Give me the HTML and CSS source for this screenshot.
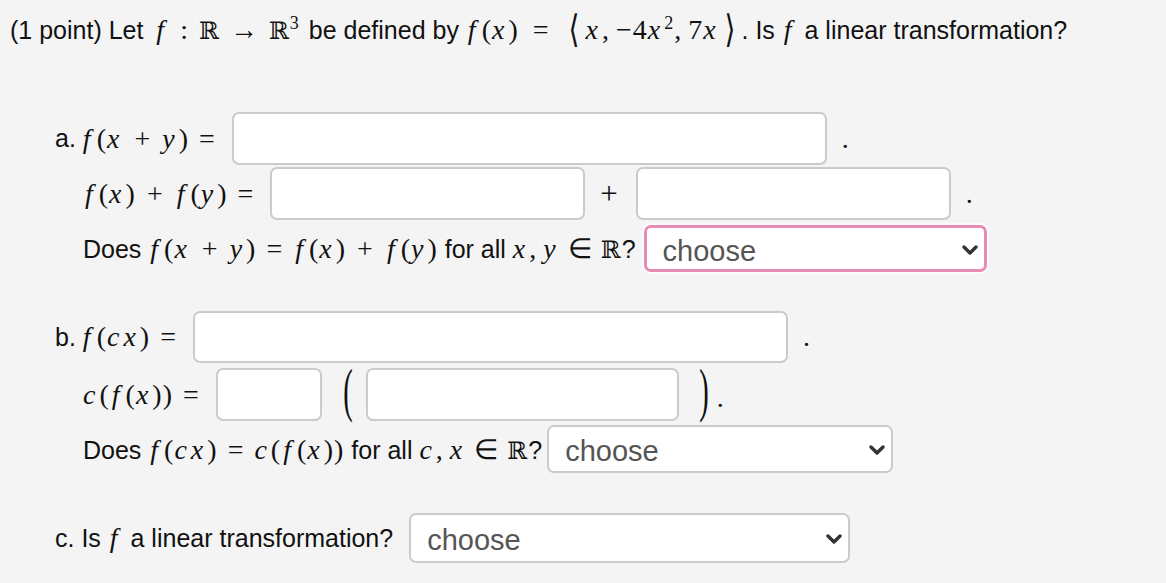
FILE: index.html
```html
<!DOCTYPE html>
<html lang="en">
<head>
<meta charset="utf-8">
<title>Linear transformation</title>
<link rel="stylesheet" href="styles.css">
</head>
<body>
<div class="page">
  <p class="title">(1 point) Let <span class="m lead"><i class="f">f</i><span class="rel">:</span><span class="bb">ℝ</span><span class="rel">→</span><span class="bb">ℝ</span><sup class="cube">3</sup></span> be defined by <span class="m"><i class="f">f</i>(<i>x</i>)<span class="rel wide">=</span><span class="ang">⟨</span><i>x</i>,<span class="sp"></span>−4<i>x</i><sup>2</sup>,<span class="sp"></span>7<i>x</i><span class="ang">⟩</span></span>. Is <span class="m"><i class="f">f</i></span> a linear transformation?</p>

  <div class="part part-a">
    <div class="row r-a1">
      <span class="lbl">a.</span>
      <span class="m"><i class="f">f</i>(<i>x</i><span class="op">+</span><i>y</i>)<span class="rel">=</span></span>
      <input class="box w-lg" type="text">
      <span class="m dot">.</span>
    </div>
    <div class="row sub r-a2">
      <span class="m"><i class="f">f</i>(<i>x</i>)<span class="op">+</span><i class="f">f</i>(<i>y</i>)<span class="rel">=</span></span>
      <input class="box w-md" type="text">
      <span class="m plus">+</span>
      <input class="box w-md" type="text">
      <span class="m dot">.</span>
    </div>
    <div class="row sub r-a3">
      <span class="txt">Does <span class="m"><i class="f">f</i>(<i>x</i><span class="op">+</span><i>y</i>)<span class="rel">=</span><i class="f">f</i>(<i>x</i>)<span class="op">+</span><i class="f">f</i>(<i>y</i>)</span> for all <span class="m"><i>x</i>,<span class="sp"></span><i>y</i><span class="rel in">∈</span><span class="bb">ℝ</span></span>?</span>
      <div class="select focus s-a">
        <select><option>choose</option><option>yes</option><option>no</option></select>
        <svg class="chev" viewBox="0 0 16 11" width="16" height="11"><path d="M2 2 L8 8 L14 2" fill="none" stroke="#333" stroke-width="3.4" stroke-linecap="round" stroke-linejoin="round"/></svg>
      </div>
    </div>
  </div>

  <div class="part part-b">
    <div class="row r-b1">
      <span class="lbl">b.</span>
      <span class="m"><i class="f">f</i>(<i>c</i><i>x</i>)<span class="rel">=</span></span>
      <input class="box w-lg" type="text">
      <span class="m dot">.</span>
    </div>
    <div class="row sub r-b2">
      <span class="m"><i>c</i>(<i class="f">f</i>(<i>x</i>))<span class="rel">=</span></span>
      <input class="box w-sm" type="text">
      <span class="m big open">(</span>
      <input class="box w-md2" type="text">
      <span class="m big close">)</span>
      <span class="m dot2">.</span>
    </div>
    <div class="row sub r-b3">
      <span class="txt">Does <span class="m"><i class="f">f</i>(<i>c</i><i>x</i>)<span class="rel">=</span><i>c</i>(<i class="f">f</i>(<i>x</i>))</span> for all <span class="m"><i>c</i>,<span class="sp"></span><i>x</i><span class="rel in">∈</span><span class="bb">ℝ</span></span>?</span>
      <div class="select s-b">
        <select><option>choose</option><option>yes</option><option>no</option></select>
        <svg class="chev" viewBox="0 0 16 11" width="16" height="11"><path d="M2 2 L8 8 L14 2" fill="none" stroke="#333" stroke-width="3.4" stroke-linecap="round" stroke-linejoin="round"/></svg>
      </div>
    </div>
  </div>

  <div class="part part-c">
    <div class="row r-c">
      <span class="txt">c. Is <span class="m"><i class="f">f</i></span> a linear transformation?</span>
      <div class="select s-c">
        <select><option>choose</option><option>yes</option><option>no</option></select>
        <svg class="chev" viewBox="0 0 16 11" width="16" height="11"><path d="M2 2 L8 8 L14 2" fill="none" stroke="#333" stroke-width="3.4" stroke-linecap="round" stroke-linejoin="round"/></svg>
      </div>
    </div>
  </div>
</div>
</body>
</html>
```

FILE: styles.css
```css
html, body {
  margin: 0;
  padding: 0;
  background: #f4f4f4;
}
body {
  font-family: "Liberation Sans", Arial, sans-serif;
  font-size: 25px;
  color: #111;
}
.page {
  padding: 12px 0 0 10px;
}
.title {
  margin: 0;
  height: 36px;
  line-height: 36px;
  white-space: nowrap;
}
.m {
  font-family: "Liberation Serif", "Times New Roman", serif;
  font-size: 28px;
  letter-spacing: 1px;
}
.m i {
  font-style: italic;
  padding-right: 3px;
}
.m i.f {
  padding: 0 5px 0 2px;
}
.m sup {
  font-size: 18px;
  line-height: 0;
  vertical-align: 10px;
}
.lead {
  margin-left: 4px;
}
.cube {
  margin-right: 2px;
}
.sp {
  display: inline-block;
  width: 6px;
}
.bb {
  font-family: "DejaVu Serif", serif;
  font-size: 24px;
}
.rel {
  margin: 0 10px;
}
.rel.wide {
  margin: 0 14px;
}
.rel.in {
  margin: 0 8px;
}
.op {
  margin: 0 11px;
}
.ang {
  display: inline-block;
  font-family: "DejaVu Serif", serif;
  transform: scaleY(1.35);
  margin: 0 5px;
}
.part {
  padding-left: 45px;
}
.part-a { margin-top: 64px; }
.part-b { margin-top: 39px; }
.part-c { margin-top: 40px; }
.row {
  display: flex;
  align-items: center;
  white-space: nowrap;
}
.row.sub {
  padding-left: 28px;
}
.lbl {
  margin-right: 5px;
}
.box {
  box-sizing: border-box;
  height: 53px;
  margin: 0 0 0 6px;
  border: 2px solid #cbcbcb;
  border-radius: 7px;
  background: #fff;
  padding: 0 10px;
  font-size: 22px;
  outline: none;
}
.w-lg { width: 595px; }
.w-md { width: 315px; }
.w-sm { width: 106px; }
.w-md2 { width: 313px; margin-left: 0; }
.dot {
  margin-left: 15px;
}
.plus {
  font-size: 31px;
  letter-spacing: 0;
  margin: 0 18px 0 15px;
}
.plus + .box { margin-left: 0; }
.big {
  display: inline-block;
  font-size: 30px;
  letter-spacing: 0;
  transform: translateY(-5px) scale(0.95, 2.0);
}
.big.open {
  margin: 0 13px 0 21px;
}
.big.close {
  margin: 0 16px 0 20px;
}
.dot2 {
  margin-left: -8px;
  padding-top: 6px;
}
.r-a2 { margin-top: 2px; }
.r-a3 { margin-top: 5px; }
.r-b2 { margin-top: 5px; }
.r-b3 { margin-top: 4px; }
.r-b1 .box { height: 52px; }
.select {
  position: relative;
  box-sizing: border-box;
  margin-left: 5px;
  height: 48px;
  border: 2px solid #cbcbcb;
  border-radius: 7px;
  background: #fff;
}
.select.focus {
  height: 47px;
  border: 3px solid #e68bb4;
  box-shadow: 0 0 0 2px #fbfbfb;
}
.select select {
  -webkit-appearance: none;
  appearance: none;
  width: 100%;
  height: 100%;
  border: none;
  background: transparent;
  font-family: "Liberation Sans", Arial, sans-serif;
  font-size: 29px;
  color: #555;
  padding: 4px 0 0 16px;
  outline: none;
}
.chev {
  position: absolute;
  right: 6px;
  top: 50%;
  margin-top: -4px;
}
.s-a { width: 343px; margin-left: 8px; }
.s-b { width: 346px; }
.s-c { width: 441px; height: 50px; margin-left: 16px; }
```
